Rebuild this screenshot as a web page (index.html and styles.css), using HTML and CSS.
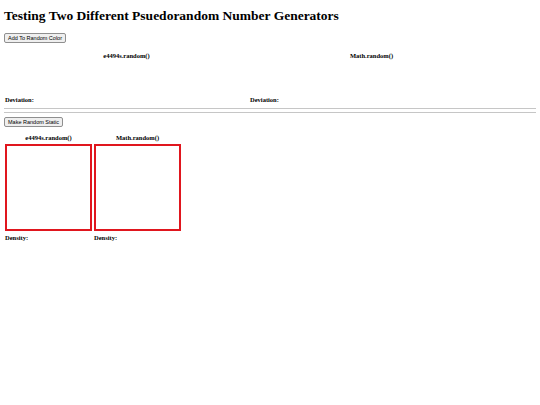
FILE: index.html
```html
<!DOCTYPE html>
<html>
<head>
<meta charset="utf-8">
<link rel="stylesheet" href="styles.css">
</head>
<body>
<h1 class="title">Testing Two Different Psuedorandom Number Generators</h1>
<button class="btn">Add To Random Color</button>
<div class="colors">
  <div class="col">
    <div class="label">e4494s.random()</div>
    <div class="canvas-space"></div>
    <div class="stat">Deviation:</div>
  </div>
  <div class="col">
    <div class="label">Math.random()</div>
    <div class="canvas-space"></div>
    <div class="stat">Deviation:</div>
  </div>
</div>
<div class="rule"></div>
<div class="rule second"></div>
<button class="btn btn-static">Make Random Static</button>
<div class="static">
  <div class="scol">
    <div class="label">e4494s.random()</div>
    <div class="box"></div>
    <div class="stat">Density:</div>
  </div>
  <div class="scol">
    <div class="label">Math.random()</div>
    <div class="box"></div>
    <div class="stat">Density:</div>
  </div>
</div>
</body>
</html>
```
FILE: styles.css
```css
html, body {
  margin: 0;
  background: #fff;
}
body {
  padding: 0 4px;
  font-family: "Liberation Serif", serif;
  color: #000;
}
.title {
  font-size: 13.5px;
  font-weight: bold;
  margin: 7px 0 0;
  line-height: 18px;
}
.btn {
  display: block;
  font-family: "Liberation Sans", Arial, sans-serif;
  font-size: 5.5px;
  line-height: 8px;
  padding: 0 3px;
  height: 10px;
  margin: 8px 0 0;
  background: #efefef;
  border: 1px solid #8f8f8f;
  border-radius: 2px;
  color: #000;
}
.btn-static {
  margin-top: 4px;
}
.colors {
  display: grid;
  grid-template-columns: 245px 245px;
  margin-top: 9px;
}
.label {
  font-size: 6.5px;
  font-weight: bold;
  text-align: center;
  line-height: 8px;
  color: #000;
}
.canvas-space {
  height: 36px;
}
.stat {
  font-size: 6.5px;
  font-weight: bold;
  line-height: 8px;
  padding-left: 1px;
}
.rule {
  height: 1px;
  background: #c6c6c6;
  margin-top: 4px;
}
.rule.second {
  margin-top: 3px;
}
.static {
  display: grid;
  grid-template-columns: 89px 89px;
  margin-top: 7px;
}
.scol .label {
  margin-bottom: 2px;
}
.box {
  width: 83px;
  height: 83px;
  border: 2px solid #e0161e;
  margin-left: 1px;
}
.scol .stat {
  margin-top: 3px;
}
```
